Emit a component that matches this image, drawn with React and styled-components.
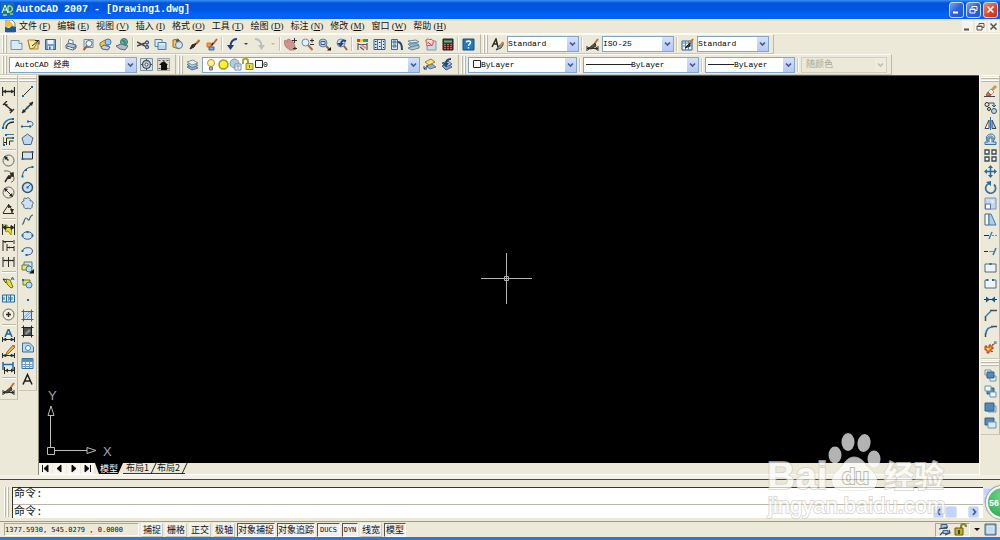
import React from 'react';
import styled, { createGlobalStyle, css } from 'styled-components';

const CJK = '"Noto Sans CJK SC"';
const serif = `"Liberation Serif", ${CJK}, serif`;
const mono = `"Liberation Mono", ${CJK}, monospace`;
const narrowMono = `"DejaVu Sans Mono", ${CJK}, monospace`;
const face = '#ece9d8';
const edge = '#aca899';

const GlobalStyle = createGlobalStyle`
  * { box-sizing: border-box; }
  body { margin: 0; background: ${face}; overflow: hidden; }
  button, input, select { font: inherit; color: inherit; margin: 0; }
`;

/* ---------- icon drawings, on a 13 x 13 grid ---------- */

const ring = (x, y, r) => `M${x - r} ${y}a${r} ${r} 0 1 0 ${r * 2} 0a${r} ${r} 0 1 0 ${-r * 2} 0Z`;
const dot = (x, y) => [`M${x - 1} ${y - 1}h2v2h-2Z`, 'none', '#1268b8'];
const K = '#2a2a26';
const S = '#cfe3f5';

/* each part: [path, stroke, fill, stroke width] */
const ICONS = {
  new: [['M1 2.5h8l3 3V11.5H1Z', '#7097b8', '#dbeafa'], ['M9 2.5v3h3', '#7097b8', '#fff']],
  open: [['M1 2h7l3 2v7H3Z', '#a88a3c', '#f3dc7a'], ['M1 2l2 9 4-1 3-5', '#a07a28', '#f9edac'], ['M5 8l6-5M8 2.500h4v4', K, 'none', 1]],
  save: [['M1.500 1.500h10v10h-10Z', '#315f9c', '#6fa0d8'], ['M3.500 2h6v4h-6Z', 'none', '#eef6ff'], ['M4 8h5v3.500H4Z', 'none', '#dbe7f5'], ['M5 8.500h1.500v3H5Z', 'none', '#315f9c']],
  print: [['M4 1.500l4 1v4l-5-1Z', '#687990', '#fff'], ['M1 7l3-2 7 2v3l-3 2-7-2Z', '#53647f', '#b6c4da'], ['M2 8l6 2 3-2M8 10v2', '#53647f', 'none'], ['M3 9.500l5 1.500', '#fff', 'none', 1]],
  preview: [['M2 1.500h9v8H2Z', '#6d8bab', '#d9e7f6'], [ring(7, 5.5, 3), '#55728f', '#edf8ff'], ['M5 8l-3.500 4', '#a1602d', 'none', 2]],
  publish: [['M1 5l5-3 5 3-4 5-6-2Z', '#8b7433', '#f3c64b'], [ring(9, 4, 3), '#3479b8', '#9bcbf0'], ['M2 9l3-2 6 2-2 3-6-1Z', '#53647f', '#c5d0df']],
  dwf: [[ring(8, 4, 3.5), '#47688a', '#59b2db'], ['M6 2l3 2-1 3', '#40942f', 'none', 2], ['M0 8l5-2 7 2-3 4-5-1Z', '#5e6875', '#b3bdc9']],
  cut: [['M0 4l8 4M0 8l8-3', '#454545', 'none', 1.5], [ring(10, 4.5, 1.5), '#35557f', 'none', 1.3], [ring(10, 9, 1.5), '#35557f', 'none', 1.3]],
  copy: [['M1 1.500h7v7H1Z', '#4d81ad', '#dcecfa'], ['M4 4.500h8v7H4Z', '#4d81ad', '#b8d8f3'], ['M5 6h6', '#fff', 'none', 1]],
  paste: [['M2 2l5-1 4 4-3 6-6-2Z', '#917029', '#ecc861'], [ring(8, 7, 3.5), '#607b96', '#cde4f8'], ['M5 3l3-1', '#555', 'none', 2]],
  brush: [['M11.500 2L8 6', '#ab6936', 'none', 2], ['M8 5.500L6 9l-4 2 2-4Z', '#232323', '#3d2d20', 1]],
  block: [['M12 1L8 6', '#b5662b', 'none', 2], ['M8 5L6 8', '#2d2d2d', 'none', 2], ['M2 5h4v4H2Z', '#e16c20', '#ff982f'], ['M4 9h5v3H4Z', '#376a9f', '#73abe0']],
  undo: [['M11 1C7 1 4 4 4.500 9', '#1b3f82', 'none', 2], ['M1 7h7l-3.500 5Z', 'none', '#1b3f82']],
  redo: [['M2 1c4 0 7 3 6.500 8', '#b9bdc5', 'none', 2], ['M5 7h7l-3.500 5Z', 'none', '#b9bdc5']],
  pan: [['M1 2l3 2-1-2 2-1 4 3 2 4-1 4-4 0-4-3-2-4Z', '#b17f78', '#cf958c'], ['M10.500 0v5M8 2.500h5M9 10.500h4M11 9v3', '#303030', 'none', 1]],
  zoom: [[ring(4.5, 4.5, 3.5), '#6d8aa8', '#dff0ff'], ['M7 7l4.500 5', '#b36c3b', 'none', 2], ['M9 2.500h4M11 .5v4M9 6.500h4', '#303030', 'none']],
  zoomwin: [[ring(5, 5, 4), '#617e9e', '#b5cde6'], ['M3 3.500h4v3H3Z', '#315c8c', '#d9eaff'], ['M8 8l3 3', '#a36032', 'none', 2], ['M9 12.500h4V9Z', 'none', '#111']],
  zoomprev: [[ring(6, 5, 4), '#6d89a8', '#c9dded'], ['M9 8l3 4', '#a36032', 'none', 2], ['M11 3C8 2 6 3 6 6', '#1b477d', 'none', 2], ['M2 5h7L5.500 9Z', 'none', '#1b477d']],
  props: [['M1 1h3v3H1Z', 'none', '#e8362d'], ['M4 1h3v3H4Z', 'none', '#f6cf23'], ['M7 1h3v3H7Z', 'none', '#37a63e'], ['M10 1h2v3h-2Z', 'none', '#3578d6'], ['M2 5v7M11 5v7M2 6.500h9M4 9l4 3', '#5c5264', 'none', 1.2], ['M5 7l5 3', '#df947c', 'none', 2]],
  design: [['M1 1.500h11v10H1Z', '#315e8a', '#d7e8f8'], ['M4.500 2v9M8.500 2v9', '#457ba8', 'none'], ['M2 3.500h1.500M2 6.500h1.500M2 9.500h1.500M6 4.500h1.500M6 8.500h1.500M10 3.500h1M10 6.500h1M10 9.500h1', K, 'none']],
  palette: [['M1.500 1.500h6v10h-6Z', '#3e6995', '#d5e6f8'], ['M3 3h3v2H3ZM3 7h3v2H3Z', '#527da5', '#84abd1'], ['M8 4c3 0 4 4 4 8', '#294768', 'none', 2]],
  sheets: [['M1 3l8-1 3 2-8 1Z', '#6d8998', '#dceaf1'], ['M1 6l8-1 3 2-8 2Z', '#6d8998', '#80bce2'], ['M4 9l8-2v3l-7 2-4-2Z', '#75828b', '#b4c6ce']],
  markup: [['M3 3h9v9H3Z', '#8398ab', '#cad8e8'], ['M2 2c2-2 3 0 4-.5 2-1 2 1 3 1 1 2-1 3 0 4-1 2-3 0-4 1-2 1-3 0-2-2-1-1-1-2-1-3.500Z', '#e23b3b', '#ffe0df', 1], ['M3.500 4l4 3', '#e23b3b', 'none']],
  calc: [['M2 1h10v11H2Z', '#222', '#3c3c3c'], ['M3 2.500h8v2H3Z', 'none', '#50b77f'], ['M3 6.500h8M3 8.500h8M3 10.500h8', '#d36262', 'none'], ['M5.500 5v7M8.500 5v7', '#292929', 'none']],
  help: [['M1 1h11v11H1Z', '#174d83', '#2877b6'], ['M4.500 4.500c0-2 4-2 4 0 0 2-2 1.500-2 3.500M6.500 9v1.500', '#fff', 'none', 1.5]],
  textStyle: [['M1 9l4-8 2 8M2.500 6h4', K, 'none', 1.5], ['M12 4L8 8 5 12l5-2 2-3Z', '#34434f', '#8f9a9f'], ['M12 4l-3 4', '#d4843b', 'none', 2]],
  dimStyle: [['M1 8v5M12 8v5M1 10.500h11M1 10.500l2-1v2ZM12 10.500l-2-1v2Z', K, K], ['M12 1L9 5', '#bd7438', 'none', 2], ['M9 5l-6 5 2 1 5-3Z', '#3a322a', '#5b5145']],
  tableStyle: [['M1 3h10v9H1Z', '#315e8a', '#eaf5ff'], ['M1 5h10M1 8h10M4.500 3v9M7.500 3v9', '#5b8bb8', 'none'], ['M12 1L9 5', '#bd7438', 'none', 2], ['M9 5l-5 5 5-2Z', '#252525', '#404040']],
  gear: [['M.5.5h12v12H.5Z', '#7d94a6', '#d6e3eb'], [ring(6.5, 6.5, 4), '#56636c', '#c6d0d4', 1.5], [ring(6.5, 6.5, 1.5), '#394c5a', '#fff'], ['M6.500 1v2M6.500 10v2M1 6.500h2M10 6.500h2M3 3l1 1M9 9l1 1M10 3L9 4M4 9l-1 1', '#41525e', 'none']],
  workspace: [['M.5.5h12v12H.5Z', '#a2a297', '#dedacb'], ['M1.500 2.500h2M5.500 2.500h2M9.500 2.500h2M1.500 10.500h2M9.500 10.500h2', '#555', 'none'], ['M2 7l3-3 1 0 1-1 4 4H10v5H4V7Z', 'none', '#111']],
  layers: [['M1 9l6-2 5 3-6 2Z', '#57789b', '#8fb1d1'], ['M1 6.500l6-2 5 3-6 2Z', '#57789b', '#b7d3ec'], ['M1 4l6-2 5 3-6 2Z', '#8092a2', '#e8edf2']],
  layerCur: [['M3 8l6-2 4 3-6 2Z', '#57789b', '#8fb1d1'], ['M2 4l6-3 4 3-6 3Z', '#a17b2b', '#ffe179'], ['M1 11l4-3M1 8v3h3', '#193f72', 'none', 1]],
  layerPrev: [['M2 8l6-2 4 3-6 3Z', '#405f85', '#87a8ca'], ['M2 5l6-2 4 3-6 3Z', '#405f85', '#bdd5ee'], ['M11 1C8 1 6 3 6 6', '#1b477d', 'none', 2], ['M3 5h6L6 9Z', 'none', '#1b477d']],
  bulb: [[ring(6, 5, 3.5), '#b99826', '#fff493'], ['M4.500 9h3v3h-3Z', '#6f7786', '#a8afbc']],
  sun: [[ring(6.5, 6.5, 4.5), '#9d9a2a', '#ffef2e', 1.5]],
  vp: [[ring(5.5, 5.5, 4.5), '#8197a9', '#b6cad9'], ['M6 6h6v6H6Z', '#7290aa', '#eff7ff'], ['M7 8h4M9 7v4', '#829eae', 'none']],
  lock: [['M2 6V3c0-3 5-3 5 0v2', '#aaa62c', 'none', 2], ['M5 5.500h7v6H5Z', '#8f8c24', '#e3dc45'], ['M8.500 7v3', '#77731a', 'none', 1]],
  swatch: [['M2.500 2.500h7v7h-7Z', K, '#fff']],
  dimLin: [['M.5 2v9M12.500 2v9M1 6.500h11', K, 'none', 1.3], ['M1 6.500l3-2v4ZM12 6.500l-3-2v4Z', 'none', K]],
  dimAl: [['M1 4l4-4M8 12l4-4M2.500 3l8 7', K, 'none', 1.3], ['M2 2.500l4 1-2 2ZM11 10.500l-4-1 2-2Z', 'none', K]],
  dimArc: [['M1 11C1 6 5 2 10 2', '#2478bb', 'none', 1.5], ['M4 12c0-4 3-7 8-7', K, 'none', 1.5], dot(11, 2), dot(1, 11)],
  ordinate: [['M4.500 12V5h7M7.500 12V8h4M1 9.500h3', K, 'none'], ['M1.500 4v8M4 1.500h8', '#3b78ac', 'none', 1], dot(4, 2), dot(11, 5), dot(2, 12)],
  radius: [[ring(6.5, 6.5, 5.5), '#66665f', 'none'], ['M6.500 6.500L3 3', K, 'none', 1.5], ['M2 2l4 1-3 3Z', 'none', K]],
  jog: [['M2 1c6-1 10 3 10 8 0 2-2 3-3 3', '#66665f', 'none'], ['M3 12l3-5 2 1 3-5M6 6l3 0M8 4l3-1v4', K, 'none', 1.5]],
  diameter: [[ring(6.5, 6.5, 5.5), '#66665f', 'none'], ['M3 3l7 7', K, 'none'], ['M2 2l4 1-3 3ZM11 11l-4-1 3-3Z', 'none', K]],
  angle: [['M1 11.500h11M1 11L7 2M6 4c3 1 4 3 4 7', K, 'none'], ['M6 2l4 3-4 1ZM10 11L8 7h4Z', 'none', K]],
  quick: [['M1 2l4 0 2 3 3-2-1 9-3-4-2 1Z', '#8d9120', '#e8dd2a'], ['M.5 1v11M12.500 1v11M1 4.500h11M1 4.500l3-2v4ZM12 4.500l-3-2v4Z', K, K]],
  baseline: [['M1 1v11M5 5v7M12 1v4M12 7v5M1 2.500h10M5 8.500h7', K, 'none', 1], ['M1 3l3-1v2ZM5 8.500l3-1v2Z', 'none', K]],
  cont: [['M1 2v10M6.500 2v10M12 2v10M1 5.500h11', K, 'none'], ['M1 5.500l2-1v2ZM6.500 5.500l-2-1v2ZM6.500 5.500l2-1v2ZM12 5.500l-2-1v2Z', 'none', K]],
  leader: [['M1 3l5 1M1 3l3 4', K, K], ['M4 3l4 1 3 7-2 1-4-4Z', '#6f741a', '#e8dd2a'], ['M9 4l1.500-3L12 4M9.500 3h2', '#2478bb', 'none']],
  tol: [['M.5 3h12v7H.5Z', '#2869a0', '#dcebf8'], ['M4.500 3v7M8.500 3v7M2 5v3M6 5h1v3H6M10 5v3', '#2869a0', 'none', 1]],
  center: [[ring(6.5, 6.5, 5.5), '#66665f', '#f2f0e2'], ['M6.500 4v5M4 6.500h5', K, 'none', 1.5]],
  dimEdit: [['M3 8l3.500-8L10 8M4.500 5h4', '#22609a', 'none', 1.5], ['M.5 8v5M12.500 8v5M1 10.500h11M1 10.500l3-1v2ZM12 10.500l-3-1v2Z', K, K]],
  dimText: [['M.5 8v5M12.500 8v5M1 10.500h11M1 10.500l3-1v2ZM12 10.500l-3-1v2Z', K, K], ['M11 0L5 7l-1 3 3-2 6-6Z', '#926827', '#eab93f'], ['M11 0l2 2', '#df5c5c', 'none', 2]],
  dimUpd: [['M1 1v8M11 1v8M1 3.500h10', '#27689f', 'none', 1.5], ['M2.500 6v7M12.500 6v7M3 9.500h9', K, 'none'], ['M3 9.500l3-2v4ZM12 9.500l-3-2v4Z', 'none', K]],
  line: [['M2 11L11 2', K, 'none', 1], dot(2, 11), dot(11, 2)],
  xline: [['M1 12L12 1', K, 'none', 1.5], ['M1 12l1-4 3 3ZM12 1L8 2l3 3Z', 'none', K], dot(6.5, 6.5)],
  pline: [['M1 9.500h8c4 0 4-5 0-5H8', '#376b91', 'none', 1], dot(1, 9.5), dot(9, 9.5), dot(7, 4.5)],
  polygon: [['M6.500 1L12 5l-2 6.500H3L1 5Z', '#4e657c', '#bdd8ed']],
  rect: [['M1.500 3h10v7h-10Z', K, S], dot(11.5, 3), dot(1.5, 10)],
  arc: [['M1.500 12C1 6 6 2 12 2', '#37516a', 'none', 1], dot(1.5, 11.5), dot(5, 5), dot(11.5, 2)],
  circle: [[ring(6.5, 6.5, 5), '#38536e', '#c7e0f5', 1.5], ['M6.500 6.500L10 3', '#2468a4', 'none'], dot(6.5, 6.5)],
  cloud: [['M5 2c2-3 5 0 4 2 3-1 4 3 2 4 1 3-2 5-4 3-3 2-5-1-4-3C0 8 0 4 3 4 2 1 4 0 5 2Z', '#4f6881', '#cfe0f0']],
  spline: [['M1 11C3 12 3 5 5 5S7 8 8 7 9 2 12 2', '#4b6071', 'none', 1.2]],
  ellipse: [['M1.500 6.500c0-5 10-5 10 0s-10 5-10 0Z', '#355b7f', S, 1], dot(1.5, 6.5), dot(6.5, 3), dot(11.5, 6.5)],
  earc: [['M1.500 6c0-4 10-5 10 0 0 3-3 4-6 4', '#3f5870', '#d6e9fa'], dot(1.5, 6), dot(5.5, 10)],
  insert: [['M3 1h8v6H3Z', '#4e7695', S], ['M1 4h7v5H1Z', '#79751d', '#eee26c'], [ring(8, 8, 3), '#3b77aa', '#b8def5'], ['M8 12.500h5V8Z', 'none', '#111']],
  makeBlock: [['M2 3h7v5H2Z', '#79751d', '#eee26c'], [ring(8, 8, 3), '#3b77aa', '#b8def5'], dot(2, 3)],
  point: [dot(7, 7)],
  hatch: [['M2.500 2.500h8v8h-8Z', '#4b7594', '#cde5f5'], ['M.5 2.500h12M.5 10.500h12M2.500.5v12M10.500.5v12', '#376a93', 'none'], ['M3 8l5-5M3 10l7-7M6 10l4-4', '#86acc9', 'none']],
  gradient: [['M2.500 2.500h8v8h-8Z', '#333', '#49535a'], ['M4 8l4-4 2 2-5 4Z', 'none', '#89978d'], ['M.5 2.500h12M.5 10.500h12M2.500.5v12M10.500.5v12', '#222', 'none']],
  region: [['M1.500 2h7l4 4v5h-11Z', '#3c6e96', '#b8dcf3'], [ring(7, 7, 2.5), '#437da8', '#f7fbff']],
  table: [['M1 1.500h11v10H1Z', '#3b70a2', '#e7f3fc'], ['M1 2h11v3H1Z', 'none', '#548ebf'], ['M1 7.500h11M1 9.500h11M4.500 4v7M8.500 4v7', '#6ba0ca', 'none']],
  mtext: [['M2 11.500L6.500 1.500 11 11.500M3.500 8h6', '#202020', 'none', 1.5]],
  erase: [['M12 1L8 5', '#d39747', 'none', 3], ['M7 4l3 3-3 3-3-3Z', '#ad9b85', '#f7f2e7'], ['M4 7l3 3-3 1-2-1Z', '#a54943', '#dd6962'], ['M0 11.500h11', '#454545', 'none']],
  dup: [[ring(3, 3.5, 2), K, '#ddebf5'], [ring(5, 8, 1.5), K, '#ddebf5'], [ring(10, 10, 2.5), '#35536e', '#bed4e7'], ['M5 2h5v4M8 4l2 2 2-2', '#23537e', 'none', 1]],
  mirror: [['M1 11.500L5 3v8.500Z', '#39444c', '#fff'], ['M12 11.500L8 3v8.500Z', '#39444c', '#a8cbed'], ['M6.500 0v13', '#2e76ae', 'none']],
  offset: [['M1 11.500h11V9H9c2-3 0-6-2.500-6S2 6 4 9H1Z', '#3c719b', '#b8d8f0'], ['M3 8c-2-4 1-7 4-7s5 3 3 6', '#3c719b', 'none', 1], ['M5 9V5h3v4', '#376080', '#fff']],
  array: [['M1 1h4v4H1ZM8 1h4v4H8ZM1 8h4v4H1ZM8 8h4v4H8Z', '#414850', '#edf5fa', 1.3]],
  move: [['M6.500 2v9M2 6.500h9', '#28679f', 'none', 1.5], ['M6.500 0L9 3H4ZM6.500 13L9 10H4ZM0 6.500L3 4v5ZM13 6.500L10 4v5Z', 'none', '#28679f']],
  rotate: [['M5 2.500a5 5 0 1 0 5 1', '#3c6e98', 'none', 1.7], ['M2 1l5-1v5Z', 'none', '#28679f']],
  scale: [['M1 1h11v11H1Z', '#7999b6', '#c5d9eb'], ['M1.500 7h5v5h-5Z', '#557591', '#f4faff'], ['M7 4h2v2', '#fff', 'none']],
  stretch: [['M1 1h4v11H1Z', '#53606c', '#f8fbfd'], ['M5 1h2l5 11H5Z', '#46779f', '#aad0f0']],
  trim: [['M0 6.500h5', K, 'none', 1], ['M5 10L8 3', '#3586c6', 'none', 1.5], ['M8 6.500h2M11 6.500h2', '#5b8fbd', 'none']],
  extend: [['M0 6.500h4', K, 'none', 1], ['M5 6.500h5', '#509bd3', 'none', 1], ['M9 10l3-7', '#3275a9', 'none', 1.5]],
  breakPt: [['M1 3h11v8H1Z', '#576773', '#edf5fc'], dot(6.5, 3)],
  breakTwo: [['M4 3H1v8h11V3H9', '#576773', '#edf5fc'], dot(3.5, 3), dot(9, 3)],
  join: [['M0 6.500h13', K, 'none', 1], ['M6 6.500L2 3.500v6ZM7 6.500L11 3.500v6Z', 'none', '#23537e']],
  chamfer: [['M1.500 12V7M6 1.500h7', '#444b50', 'none', 1.5], ['M2 7l5-5', '#2d7dbd', 'none', 1.5]],
  fillet: [['M1.500 12V8M7 1.500h6', '#444b50', 'none', 1.5], ['M2 9c0-5 3-7 7-7', '#2d7dbd', 'none', 1.7]],
  explode: [['M1 5h2v2h2V4h2v2h2v2H7v2H5v2H3V9H1Z', '#c5342a', '#ee9f38', 1], ['M3 7h2v2H3Z', 'none', '#f9df46'], ['M8 5l3-3M10 1h2v2', '#6989a5', 'none', 1.3], ['M8 3h1v1H8ZM7 10h2v1H7Z', 'none', '#c5342a']],
  front: [['M1 1h6v5H1Z', '#6c91b0', '#edf6fe'], ['M6 7h6v5H6Z', '#6c91b0', '#edf6fe'], ['M3 3h7v6H3Z', '#345f87', '#5488b8']],
  back: [['M3 3h7v6H3Z', '#345f87', '#5488b8'], ['M1 1h6v5H1Z', '#6c91b0', '#edf6fe'], ['M6 7h6v5H6Z', '#6c91b0', '#edf6fe']],
  above: [['M4 5h8v6H4Z', '#6c91b0', '#d8e9f7'], ['M1 2h9v8H1Z', '#345f87', '#5488b8']],
  under: [['M1 1h9v7H1Z', '#345f87', '#5488b8'], ['M4 5h8v6H4Z', '#6c91b0', '#d8e9f7']],
  app: [['M0 0h13v13H0Z', 'none', '#187a72'], ['M1 10l3-8 3 8M2 7h4M7 9V3h2c3 0 3 6 0 6ZM2 12h4', '#e4fffb', 'none', 1], ['M9 11h3', '#dddddd', 'none']],
  doc: [['M2 0h6l3 3v9H2Z', '#74869c', '#f6f8fb'], ['M1 3l4-3 5 6-7 1Z', 'none', '#f1c12d'], ['M1 7l4 1 3-2 4 1v5H1Z', 'none', '#20589b']],
  comm: [['M3 1.500h6v4H3ZM5 7.500h5v3H5Z', '#425e7e', '#aac1d8'], ['M1 6l9-2M2 12l3-3M11 7l1 3-5 2', '#31475e', 'none', 1.2]],
  padlock: [['M7 6V4c0-4 5-4 5 0', '#888028', 'none', 2], ['M1 5h8v7H1Z', '#655d16', '#bdb02c'], ['M4 7h2v4H4Z', 'none', '#4b4515']],
  clean: [['M1 1h11v11H1Z', '#476b8b', '#89aeca'], ['M3 3h7v7H3Z', '#dcecf8', '#c7dceb']],
};

const Glyph = styled.svg`
  display: block;
  flex: none;
  width: 13px;
  height: 13px;
`;

const Icon = ({ name }) => (
  <Glyph viewBox="0 0 13 13" aria-hidden="true">
    {ICONS[name].map(([d, stroke, fill, w = 1], i) => (
      <path key={i} d={d} stroke={stroke} fill={fill} strokeWidth={w} />
    ))}
  </Glyph>
);

/* ---------- window frame ---------- */

const Window = styled.div`
  position: relative;
  display: flex;
  flex-direction: column;
  min-height: 100vh;
  overflow: hidden;
  background: ${face};
  font: 9px/12px ${serif};
  color: #111;
`;

const TitleBar = styled.header`
  display: flex;
  align-items: center;
  gap: 2px;
  height: 19px;
  padding: 0 2px 0 1px;
  background: linear-gradient(#3a90fa 0, #0554dc 3px, #0055e2 9px, #0265fb 15px, #0460f0 19px);
`;

const Title = styled.h1`
  flex: 1;
  margin: 0;
  font: bold 10px/16px ${mono};
  color: #fff;
`;

const WinButton = styled.button`
  display: grid;
  place-items: center;
  width: 15px;
  height: 16px;
  padding: 0;
  border: 1px solid #c9dcfa;
  border-radius: 3px;
  background: ${p => (p.$close ? 'linear-gradient(135deg,#ee8e70,#dd4526 60%,#c33415)' : 'linear-gradient(135deg,#7ba5f5,#2961e0 50%,#2158d8)')};
`;

const MenuBar = styled.nav`
  display: flex;
  align-items: center;
  gap: 7px;
  height: 15px;
  padding: 0 1px 0 4px;
  border-bottom: 1px solid #fbfaf4;
`;

const MenuItem = styled.button`
  padding: 0;
  border: 0;
  background: none;
  white-space: nowrap;
  &:first-of-type { margin-left: -5px; }
`;

const MdiButtons = styled.div`
  display: flex;
  gap: 2px;
  margin-left: auto;
`;

const MdiButton = styled.button`
  display: grid;
  place-items: center;
  width: 11px;
  height: 12px;
  padding: 0;
  border: 0;
  background: #f6f4ea;
`;

const MiniSvg = styled.svg`
  display: block;
  width: 9px;
  height: 9px;
`;

const FrameGlyph = ({ kind, color }) => (
  <MiniSvg viewBox="0 0 9 9" fill="none" stroke={color} aria-hidden="true">
    {kind === 'min' && <path d="M1 7.500h5" strokeWidth="2" />}
    {kind === 'max' && <path d="M3 3V1.500h5v4H6M1 4h5v4H1ZM1 4.500h5M3 1.500h5" />}
    {kind === 'close' && <path d="M1.500 1.500l6 6M7.500 1.500l-6 6" strokeWidth="1.600" />}
  </MiniSvg>
);

/* ---------- toolbars ---------- */

const ToolRow = styled.div`
  display: flex;
  height: ${p => p.$h}px;
`;

const dockEdges = css`
  border: solid;
  border-width: 1px 1px 1px 0;
  border-color: #fbfaf4 #bdb9a8 #cbc7b6 #fff;
`;

const Toolbar = styled.div`
  ${dockEdges}
  display: flex;
  align-items: center;
  padding-right: 3px;
`;

const Grip = styled.span`
  flex: none;
  width: 8px;
  height: 18px;
  background: linear-gradient(90deg, transparent 2px, #fff 2px, #fff 3px, #bbb7a6 3px, #bbb7a6 4px, transparent 4px, transparent 5px, #fff 5px, #fff 6px, #bbb7a6 6px, #bbb7a6 7px, transparent 7px);
`;

const HGrip = styled.span`
  width: 100%;
  height: 7px;
  background: linear-gradient(transparent 1px, #fff 1px, #fff 2px, #bbb7a6 2px, #bbb7a6 3px, transparent 3px, transparent 4px, #fff 4px, #fff 5px, #bbb7a6 5px, #bbb7a6 6px, transparent 6px);
`;

const ToolButton = styled.button`
  display: grid;
  place-items: center;
  flex: none;
  width: 17px;
  height: 16px;
  padding: 0;
  border: 0;
  background: none;
`;

const Divider = styled.span`
  flex: none;
  width: 4px;
  height: 14px;
  background: linear-gradient(90deg, transparent 1px, #c9c5b3 1px, #c9c5b3 2px, #fff 2px, #fff 3px, transparent 3px);
`;

const HDivider = styled.span`
  width: 14px;
  height: 5px;
  background: linear-gradient(transparent 2px, #bdb9a8 2px, #bdb9a8 3px, #fff 3px, #fff 4px, transparent 4px);
`;

const More = styled.button`
  display: grid;
  place-items: center;
  flex: none;
  width: 10px;
  height: 16px;
  padding: 0;
  border: 0;
  background: none;
  &::before {
    content: '';
    border: ${p => (p.$big ? 3 : 2)}px solid transparent;
    border-top-color: ${p => (p.$off ? '#b9b9b5' : p.$big ? '#111' : '#1b3f82')};
    border-bottom: 0;
  }
`;

const Tools = ({ names }) =>
  names.split(' ').map((n, i) => {
    if (n === '|') return <Divider key={i} />;
    if (n === 'v' || n === 'v-') return <More key={i} $off={n === 'v-'} aria-label="more" />;
    return <ToolButton key={i} aria-label={n}><Icon name={n} /></ToolButton>;
  });

const Combo = styled.div`
  display: grid;
  grid-template-columns: 1fr 11px;
  flex: none;
  width: ${p => p.$w}px;
  height: 16px;
  margin: 0 1px;
  border: 1px solid ${p => (p.$off ? '#d3cfbe' : '#85a5c5')};
  background: ${p => (p.$off ? face : '#fff')};
`;

const ComboSelect = styled.select`
  grid-area: 1 / 1 / 2 / 3;
  appearance: none;
  min-width: 0;
  height: 14px;
  padding: 0 0 0 ${p => p.$pad}px;
  border: 0;
  background: none;
  font: 8px/14px ${mono};
  color: #000;
  &:disabled { color: #aaa797; opacity: 1; font-size: 9px; }
`;

const ComboFace = styled.span`
  grid-area: 1 / 1;
  z-index: 1;
  display: flex;
  align-items: center;
  padding-left: 2px;
  pointer-events: none;
  svg + svg { margin-left: -1px; }
`;

const Rule = styled.span`
  width: ${p => p.$w}px;
  height: 1px;
  background: #222;
`;

const ComboArrow = styled.span`
  grid-area: 1 / 2;
  z-index: 1;
  display: grid;
  place-items: center;
  pointer-events: none;
  background: ${p => (p.$off ? '#efecdf' : 'linear-gradient(#d5e0fc,#b5c9f6)')};
  svg { width: 7px; height: 6px; }
`;

const ComboBox = ({ w, value, label, pad = 0, off, children }) => (
  <Combo $w={w} $off={off}>
    <ComboSelect aria-label={label} $pad={pad} disabled={off}>
      <option>{value}</option>
    </ComboSelect>
    <ComboFace>{children}</ComboFace>
    <ComboArrow $off={off}>
      <svg viewBox="0 0 7 6"><path d="M1 1.500L3.500 4 6 1.500" fill="none" stroke={off ? '#c2bfb0' : '#435f88'} strokeWidth="1.700" /></svg>
    </ComboArrow>
  </Combo>
);

/* ---------- work area ---------- */

const Work = styled.main`
  display: flex;
  flex: 1;
  min-height: 0;
`;

const LeftDock = styled.aside`
  display: flex;
  align-items: flex-start;
  flex: none;
  gap: 1px;
  width: 39px;
  border-right: 1px solid #8c897b;
`;

const RightDock = styled.aside`
  flex: none;
  width: 21px;
  padding-left: 1px;
  border-left: 1px solid #fff;
`;

const ToolColumn = styled.div`
  ${dockEdges}
  display: flex;
  flex-direction: column;
  align-items: center;
  width: ${p => p.$w}px;
  padding-bottom: 3px;
`;

const Column = ({ w, names }) => (
  <ToolColumn $w={w}>
    <HGrip />
    {names.split(' ').map((n, i) =>
      n === '|' ? <HDivider key={i} /> : <ToolButton key={i} aria-label={n}><Icon name={n} /></ToolButton>
    )}
  </ToolColumn>
);

const Viewport = styled.section`
  display: flex;
  flex-direction: column;
  flex: 1;
  min-width: 0;
`;

const Canvas = styled.div`
  position: relative;
  flex: 1;
  border-top: 1px solid #55534a;
  background: #000;
`;

const Cross = styled.svg`
  position: absolute;
  left: 50%;
  top: 52.2%;
  width: 51px;
  height: 51px;
  margin: -25px 0 0 -28px;
`;

const Ucs = styled.svg`
  position: absolute;
  left: 4px;
  bottom: 0;
  width: 74px;
  height: 74px;
  font: 13px "Liberation Sans", sans-serif;
`;

const TabStrip = styled.div`
  display: flex;
  height: 12px;
  border-bottom: 1px solid #fff;
`;

const TabNav = styled.button`
  display: grid;
  place-items: center;
  width: 13px;
  height: 11px;
  margin-right: 1px;
  padding: 0;
  border: 0;
  background: #f7f5ec;
  svg { width: 9px; height: 9px; }
`;

const LayoutTab = styled.button`
  position: relative;
  width: ${p => (p.$on ? 28 : 31)}px;
  height: 11px;
  padding: 0 ${p => (p.$on ? 0 : 2)}px 0 0;
  border: 0;
  font: 9px/10px ${CJK}, sans-serif;
  white-space: nowrap;
  ${p => p.$on
    ? css`background: #000; color: #fff; clip-path: polygon(0 0, 100% 0, calc(100% - 5px) 100%, 4px 100%);`
    : css`
      background: none;
      border-bottom: 1px solid #333;
      &::after { content: ''; position: absolute; right: 0; top: 0; width: 1px; height: 11px; background: #222; transform: skewX(-25deg); }
    `}
`;

/* ---------- command line and status bar ---------- */

const CommandDock = styled.section`
  display: flex;
  height: 47px;
  padding-top: 8px;
  border-bottom: 1px solid #9d9a8d;
  border-top: 4px solid #f3f1e5;
  box-shadow: inset 0 1px #48463e;
`;

const CommandGrip = styled(Grip)`
  width: 12px;
  height: 30px;
  background-position: 2px 0;
  background-repeat: no-repeat;
`;

const CommandBox = styled.div`
  display: grid;
  grid-template-rows: 16px 14px;
  flex: 1;
  height: 31px;
  border: solid #38362f;
  border-width: 1px 0 0 1px;
  background: #fff;
  font: 11px/12px ${mono};
`;

const CommandRow = styled.label`
  display: flex;
  align-items: flex-start;
  padding-left: 1px;
  & + & { border-top: 1px solid #bbb7a9; align-items: flex-end; }
`;

const CommandInput = styled.input`
  flex: 1;
  min-width: 0;
  height: 12px;
  padding: 0;
  border: 0;
  outline: 0;
  background: none;
`;

const ScrollButton = styled.button`
  display: grid;
  place-items: center;
  flex: none;
  width: ${p => p.$w || 11}px;
  height: ${p => p.$h || 12}px;
  margin-right: ${p => p.$gap || 1}px;
  padding: 0;
  border: 1px solid #d9e3fb;
  border-radius: 2px;
  background: #c3d3fb;
  svg { width: 6px; height: 8px; }
`;

const VScroll = styled.div`
  flex: none;
  width: 17px;
  padding-top: 1px;
`;

const StatusBar = styled.footer`
  display: flex;
  align-items: center;
  gap: 2px;
  height: 18px;
  padding: 0 3px 0 4px;
  border-bottom: 3px solid #2f76dc;
`;

const Coords = styled.output`
  width: 135px;
  height: 13px;
  border: 1px solid;
  border-color: ${edge} #fff #fff ${edge};
  font: 7px/12px ${narrowMono};
  white-space: nowrap;
`;

const StatusButton = styled.button`
  width: ${p => p.$w}px;
  height: 14px;
  padding: 0;
  border: 1px solid;
  border-color: ${p => (p.$on ? '#55534a #fff #fff #55534a' : '#f8f6ec #cbc7b7 #cbc7b7 #f8f6ec')};
  font: ${p => (p.$latin ? `7px/12px ${narrowMono}` : `9px/12px ${CJK}, sans-serif`)};
  white-space: nowrap;
`;

const Tray = styled.div`
  display: flex;
  align-items: center;
  gap: 1px;
  height: 14px;
  margin-left: auto;
  padding-right: 2px;
  border: 1px solid;
  border-color: ${edge} #fff #fff ${edge};
`;

/* ---------- overlays ---------- */

const Watermark = styled.svg`
  position: absolute;
  right: 50px;
  bottom: 16px;
  width: 190px;
  height: 96px;
  pointer-events: none;
  font-family: "Liberation Sans", ${CJK}, sans-serif;
`;

const Badge = styled.button`
  position: absolute;
  right: -19px;
  bottom: 21px;
  width: 33px;
  height: 33px;
  padding: 0 0 0 1px;
  border: 2px solid #f3f6f3;
  border-radius: 50%;
  background: radial-gradient(circle at 50% 30%, #6fd887, #2aa648);
  box-shadow: 0 0 1px 1px #999;
  color: #fff;
  text-align: left;
  font: bold 9px/28px "Liberation Sans", sans-serif;
`;

const MENUS = [['文件', 'F'], ['编辑', 'E'], ['视图', 'V'], ['插入', 'I'], ['格式', 'O'], ['工具', 'T'], ['绘图', 'D'], ['标注', 'N'], ['修改', 'M'], ['窗口', 'W'], ['帮助', 'H']];

const MODES = [['捕捉', 22], ['栅格', 22], ['正交', 22], ['极轴', 22], ['对象捕捉', 38, true], ['对象追踪', 38, true], ['DUCS', 23, true, true], ['DYN', 16, true, true], ['线宽', 22], ['模型', 22, true]];

const NAV = [['first', 'M1.500 1v7M7 1v7L3 4.500Z'], ['previous', 'M6 1v7L2 4.500Z'], ['next', 'M3 1v7l4-3.500Z'], ['last', 'M7.500 1v7M2 1v7l4-3.500Z']];

const Chevron = ({ d }) => <svg viewBox="0 0 6 8"><path d={d} fill="none" stroke="#435f9b" strokeWidth="1.800" /></svg>;

export default function App() {
  return (
    <Window>
      <GlobalStyle />
      <TitleBar>
        <Icon name="app" />
        <Title>AutoCAD 2007 - [Drawing1.dwg]</Title>
        <WinButton aria-label="minimize"><FrameGlyph kind="min" color="#fff" /></WinButton>
        <WinButton aria-label="restore"><FrameGlyph kind="max" color="#fff" /></WinButton>
        <WinButton $close aria-label="close"><FrameGlyph kind="close" color="#fff" /></WinButton>
      </TitleBar>

      <MenuBar>
        <Icon name="doc" />
        {MENUS.map(([t, k]) => <MenuItem key={k}>{t} (<u>{k}</u>)</MenuItem>)}
        <MdiButtons>
          <MdiButton aria-label="minimize drawing"><FrameGlyph kind="min" color="#55534c" /></MdiButton>
          <MdiButton aria-label="restore drawing"><FrameGlyph kind="max" color="#55534c" /></MdiButton>
          <MdiButton aria-label="close drawing"><FrameGlyph kind="close" color="#55534c" /></MdiButton>
        </MdiButtons>
      </MenuBar>

      <ToolRow $h={20}>
        <Toolbar>
          <Grip />
          <Tools names="new open save | print preview publish dwf | cut copy paste brush block | undo v redo v- | pan zoom zoomwin zoomprev | props design palette sheets markup calc | help" />
        </Toolbar>
        <Toolbar>
          <Grip />
          <Tools names="textStyle" />
          <ComboBox w={72} value="Standard" label="text style" />
          <Tools names="| dimStyle" />
          <ComboBox w={72} value="ISO-25" label="dimension style" />
          <Tools names="| tableStyle" />
          <ComboBox w={72} value="Standard" label="table style" />
        </Toolbar>
      </ToolRow>

      <ToolRow $h={21}>
        <Toolbar>
          <Grip />
          <ComboBox w={128} value="AutoCAD 经典" label="workspace" pad={5} />
          <Tools names="gear workspace" />
        </Toolbar>
        <Toolbar>
          <Grip />
          <Tools names="layers" />
          <ComboBox w={218} value="0" label="layer" pad={60}>
            <Icon name="bulb" /><Icon name="sun" /><Icon name="vp" /><Icon name="lock" /><Icon name="swatch" />
          </ComboBox>
          <Tools names="layerCur layerPrev" />
        </Toolbar>
        <Toolbar>
          <Grip />
          <ComboBox w={109} value="ByLayer" label="color" pad={12}><Icon name="swatch" /></ComboBox>
          <Divider />
          <ComboBox w={116} value="ByLayer" label="linetype" pad={47}><Rule $w={46} /></ComboBox>
          <Divider />
          <ComboBox w={90} value="ByLayer" label="lineweight" pad={28}><Rule $w={26} /></ComboBox>
          <Divider />
          <ComboBox w={86} value="随颜色" label="plot style" pad={4} off />
        </Toolbar>
      </ToolRow>

      <Work>
        <LeftDock>
          <Column w={18} names="dimLin dimAl dimArc ordinate | radius jog diameter angle | quick baseline cont | leader tol center | dimEdit dimText dimUpd | dimStyle" />
          <Column w={18} names="line xline pline polygon rect arc circle cloud spline ellipse earc insert makeBlock point hatch gradient region table mtext" />
        </LeftDock>
        <Viewport>
          <Canvas>
            <Cross viewBox="0 0 51 51" fill="none" stroke="#b4b4b4">
              <path d="M0 25.500h51M25.500 0v51M23.500 23.500h4v4h-4Z" />
            </Cross>
            <Ucs viewBox="0 0 74 74" fill="none" stroke="#bdbdbd">
              <path d="M4.500 58.500h7v7h-7ZM7.500 58V26M12 61.500h32M5 26.500h6L8 17ZM44 58.500v6l9-3Z" />
              <text x="5" y="11" fill="#a5a5a5" stroke="none">Y</text>
              <text x="60" y="67" fill="#a5a5a5" stroke="none">X</text>
            </Ucs>
          </Canvas>
          <TabStrip>
            {NAV.map(([n, d]) => (
              <TabNav key={n} aria-label={`${n} layout`}><svg viewBox="0 0 9 9"><path d={d} stroke="#111" strokeWidth="1" /></svg></TabNav>
            ))}
            <LayoutTab $on>模型</LayoutTab>
            <LayoutTab>布局1</LayoutTab>
            <LayoutTab>布局2</LayoutTab>
          </TabStrip>
        </Viewport>
        <RightDock>
          <Column w={19} names="erase dup mirror offset array move rotate scale stretch trim extend breakPt breakTwo join chamfer fillet explode" />
          <Column w={19} names="front back above under" />
        </RightDock>
      </Work>

      <CommandDock>
        <CommandGrip />
        <CommandBox>
          <CommandRow as="div">命令:</CommandRow>
          <CommandRow>
            命令:
            <CommandInput aria-label="命令" />
            <ScrollButton aria-label="scroll left"><Chevron d="M4 1L1.500 4 4 7" /></ScrollButton>
            <ScrollButton $w={12} $gap={11} aria-label="scroll thumb" />
            <ScrollButton $gap={4} aria-label="scroll right"><Chevron d="M2 1l2.500 3L2 7" /></ScrollButton>
          </CommandRow>
        </CommandBox>
        <VScroll>
          <ScrollButton $w={14} $h={8} aria-label="scroll up" />
          <ScrollButton $w={14} $h={8} aria-label="scroll down" />
        </VScroll>
      </CommandDock>

      <StatusBar>
        <Coords>1377.5930, 545.0279 , 0.0000</Coords>
        {MODES.map(([t, w, on, latin]) => (
          <StatusButton key={t} $w={w} $on={on} $latin={latin}>{t}</StatusButton>
        ))}
        <Tray><Tools names="comm" /><Icon name="padlock" /></Tray>
        <More $big aria-label="tray menu" />
        <Icon name="clean" />
      </StatusBar>

      <Watermark viewBox="0 0 190 96" aria-label="Baidu 经验">
        <g fill="#fff" opacity=".7" stroke="#cfcdc4" strokeWidth="2" paintOrder="stroke">
          <g stroke="none">
            <ellipse cx="75" cy="27" rx="6.500" ry="8.500" />
            <ellipse cx="88" cy="14" rx="6.500" ry="9" />
            <ellipse cx="104" cy="15" rx="6.500" ry="9" transform="rotate(10 104 15)" />
            <ellipse cx="114" cy="31" rx="6.500" ry="8.500" />
          </g>
          <path d="M94 29c5 0 9 3 12 8 4 5 11 8 11 16 0 8-6 9-12 9H84c-6 0-12-2-12-9 0-7 6-10 10-15 3-5 7-9 12-9Z" strokeWidth="1" />
          <text x="7" y="61" fontSize="39" fontWeight="bold">Bai</text>
          <text x="124" y="59" fontSize="30" fontWeight="bold">经验</text>
          <text x="8" y="85" fontSize="22">jingyan.baidu.com</text>
          <text x="82" y="56" fontSize="22" fontWeight="bold" stroke="#aaa89e">du</text>
        </g>
      </Watermark>
      <Badge aria-label="56">56</Badge>
    </Window>
  );
}
